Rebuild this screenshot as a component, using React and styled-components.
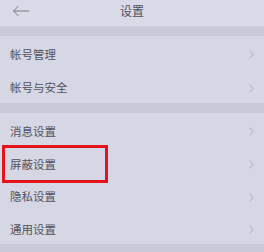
import React from 'react';
import styled, { createGlobalStyle } from 'styled-components';

const GlobalStyle = createGlobalStyle`
  html, body {
    margin: 0;
    padding: 0;
    background: #d6d7e4;
  }
  body {
    font-family: "Noto Sans CJK SC", "Noto Sans", sans-serif;
  }
`;

const Screen = styled.div`
  width: 264px;
  height: 252px;
  overflow: hidden;
  background: #c9cad9;
  display: flex;
  flex-direction: column;
  box-shadow: inset -4px 0 0 rgba(255, 255, 255, 0.18);
`;

const Header = styled.div`
  height: 26px;
  flex: none;
  background: #d9dae7;
  display: flex;
  align-items: center;
  justify-content: center;
  position: relative;
`;

const BackButton = styled.div`
  position: absolute;
  left: 12px;
  top: 3px;
  width: 18px;
  height: 16px;
  display: flex;
  align-items: center;
`;

const Title = styled.div`
  font-size: 12px;
  color: #50505c;
  line-height: 1;
  margin-top: -4px;
`;

const Gap = styled.div`
  height: ${(p) => p.$h}px;
  flex: none;
  background: #c9cad9;
`;

const Section = styled.div`
  display: flex;
  flex-direction: column;
  background: #d6d7e4;
`;

const Row = styled.div`
  height: ${(p) => p.$h}px;
  display: flex;
  align-items: center;
  justify-content: space-between;
  padding: 4px 10px 0 10px;
  box-sizing: border-box;
  position: relative;
`;

const Label = styled.span`
  font-size: 11.5px;
  color: #52525e;
  line-height: 1;
`;

const Chevron = styled.svg`
  width: 5px;
  height: 9px;
`;

const Highlight = styled.div`
  position: absolute;
  left: 2px;
  top: -1px;
  width: 106px;
  height: 38px;
  box-sizing: border-box;
  border: 3.5px solid #e4121b;
`;

const Arrow = () => (
  <svg width="18" height="12" viewBox="0 0 18 12" fill="none">
    <path d="M17 6H1.5M6.5 1L1.5 6L6.5 11" stroke="#7a7a86" strokeWidth="1" />
  </svg>
);

const Item = ({ label, h = 33, highlight }) => (
  <Row $h={h}>
    <Label>{label}</Label>
    <Chevron viewBox="0 0 5 9" fill="none">
      <path d="M0.7 0.7L4.2 4.5L0.7 8.3" stroke="#a8a8b6" strokeWidth="0.9" />
    </Chevron>
    {highlight && <Highlight />}
  </Row>
);

export default function App() {
  return (
    <Screen>
      <GlobalStyle />
      <Header>
        <BackButton>
          <Arrow />
        </BackButton>
        <Title>设置</Title>
      </Header>
      <Gap $h={10} />
      <Section>
        <Item label="帐号管理" h={33} />
        <Item label="帐号与安全" h={34} />
      </Section>
      <Gap $h={10} />
      <Section>
        <Item label="消息设置" h={33} />
        <Item label="屏蔽设置" h={33} highlight />
        <Item label="隐私设置" h={32} />
        <Item label="通用设置" h={33} />
      </Section>
      <Gap $h={8} />
    </Screen>
  );
}
